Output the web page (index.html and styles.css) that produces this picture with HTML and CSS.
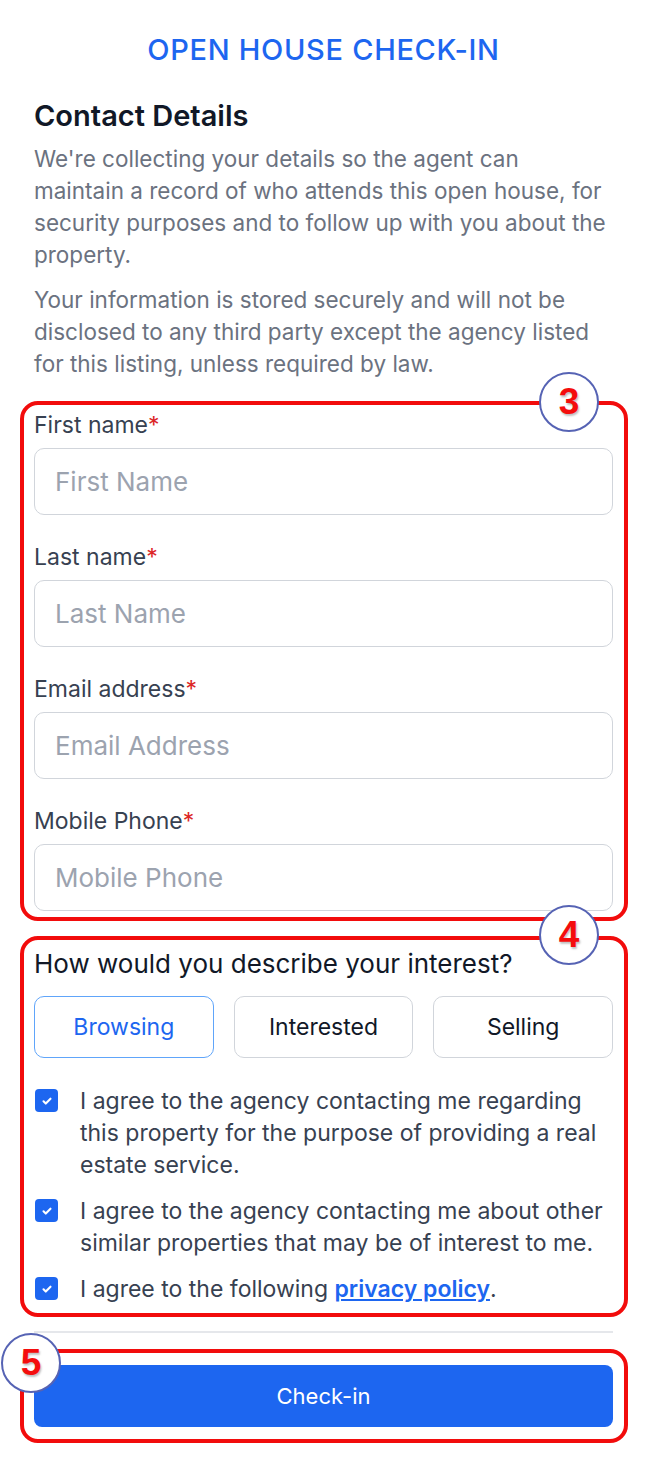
FILE: index.html
```html
<!DOCTYPE html>
<html lang="en">
<head>
<meta charset="utf-8">
<title>Open House Check-in</title>
<link rel="stylesheet" href="styles.css">
</head>
<body>
<main class="page">
  <h1 class="title">OPEN HOUSE CHECK-IN</h1>
  <h2 class="section-title">Contact Details</h2>
  <p class="intro">We're collecting your details so the agent can maintain a record of who attends this open house, for security purposes and to follow up with you about the property.</p>
  <p class="intro">Your information is stored securely and will not be disclosed to any third party except the agency listed for this listing, unless required by law.</p>

  <section class="annotated fields">
    <span class="badge badge-right">3</span>
    <div class="field">
      <label class="label">First name<span class="req">*</span></label>
      <input class="input" type="text" placeholder="First Name">
    </div>
    <div class="field">
      <label class="label">Last name<span class="req">*</span></label>
      <input class="input" type="text" placeholder="Last Name">
    </div>
    <div class="field">
      <label class="label">Email address<span class="req">*</span></label>
      <input class="input" type="text" placeholder="Email Address">
    </div>
    <div class="field">
      <label class="label">Mobile Phone<span class="req">*</span></label>
      <input class="input" type="text" placeholder="Mobile Phone">
    </div>
  </section>

  <section class="annotated interest">
    <span class="badge badge-right badge-4">4</span>
    <h3 class="question">How would you describe your interest?</h3>
    <div class="choices">
      <button class="choice active">Browsing</button>
      <button class="choice">Interested</button>
      <button class="choice">Selling</button>
    </div>
    <div class="checks">
      <div class="check-row">
        <span class="box"><svg viewBox="0 0 16 16" width="14" height="14"><path d="M4 8.3l2.6 2.6L12 5.4" fill="none" stroke="#fff" stroke-width="2.4" stroke-linecap="round" stroke-linejoin="round"/></svg></span>
        <span class="check-text">I agree to the agency contacting me regarding this property for the purpose of providing a real estate service.</span>
      </div>
      <div class="check-row">
        <span class="box"><svg viewBox="0 0 16 16" width="14" height="14"><path d="M4 8.3l2.6 2.6L12 5.4" fill="none" stroke="#fff" stroke-width="2.4" stroke-linecap="round" stroke-linejoin="round"/></svg></span>
        <span class="check-text">I agree to the agency contacting me about other similar properties that may be of interest to me.</span>
      </div>
      <div class="check-row">
        <span class="box"><svg viewBox="0 0 16 16" width="14" height="14"><path d="M4 8.3l2.6 2.6L12 5.4" fill="none" stroke="#fff" stroke-width="2.4" stroke-linecap="round" stroke-linejoin="round"/></svg></span>
        <span class="check-text">I agree to the following <a class="link" href="#">privacy policy</a>.</span>
      </div>
    </div>
  </section>

  <hr class="divider">

  <section class="annotated submit">
    <span class="badge badge-left">5</span>
    <button class="primary">Check-in</button>
  </section>
</main>
</body>
</html>
```
FILE: styles.css
```css
* { box-sizing: border-box; }
html, body { margin: 0; padding: 0; background: #fff; }
body {
  font-family: Inter, "Noto Sans", sans-serif;
  color: #111827;
}
.page {
  padding: 30px 34px 40px;
  display: flex;
  flex-direction: column;
}
.title {
  margin: 0;
  text-align: center;
  color: #1d66f0;
  font-size: 29px;
  font-weight: 500;
  letter-spacing: 0.7px;
  line-height: 40px;
}
.section-title {
  margin: 28px 0 0;
  font-size: 29px;
  font-weight: 600;
  line-height: 36px;
  color: #111827;
}
.intro {
  margin: 9px 0 0;
  font-size: 22.5px;
  line-height: 32px;
  color: #6b7280;
}
.intro + .intro { margin-top: 13px; }

.annotated { position: relative; }
.annotated::after {
  content: "";
  position: absolute;
  left: -14px;
  right: -15px;
  top: -10px;
  bottom: -10px;
  border: 4px solid #f20c0c;
  border-radius: 18px;
  pointer-events: none;
}
.interest::after { top: -10px; bottom: -12px; }
.submit::after { top: -16px; bottom: -16px; }
.badge {
  position: absolute;
  z-index: 2;
  width: 60px;
  height: 60px;
  border-radius: 50%;
  background: #fff;
  border: 2px solid #5663b4;
  color: #f40d0d;
  font-family: "Liberation Sans", Arial, sans-serif;
  font-weight: 700;
  font-size: 37px;
  line-height: 56px;
  text-align: center;
  text-shadow: 1px 2px 2px rgba(0,0,0,0.25);
}
.badge-right { right: 14px; top: -39px; }
.badge-4 { top: -41px; }
.badge-left { left: -33px; top: -32px; }

.fields {
  margin-top: 31px;
  display: flex;
  flex-direction: column;
  gap: 28px;
}
.field { display: flex; flex-direction: column; gap: 9px; }
.label {
  font-size: 23px;
  line-height: 28px;
  color: #374151;
}
.req { color: #dc2626; }
.input {
  height: 67px;
  width: 100%;
  border: 1.5px solid #d1d5db;
  border-radius: 10px;
  padding: 0 20px;
  font-family: Inter, "Noto Sans", sans-serif;
  font-size: 26px;
  color: #111827;
  background: #fff;
  outline: none;
}
.input::placeholder { color: #9ca3af; }

.interest { margin-top: 35px; }
.question {
  margin: 0;
  font-size: 26px;
  font-weight: 400;
  line-height: 36px;
  color: #111827;
}
.choices {
  margin-top: 14px;
  display: grid;
  grid-template-columns: 1fr 1fr 1fr;
  gap: 20px;
}
.choice {
  height: 62px;
  border: 1.5px solid #d1d5db;
  border-radius: 10px;
  background: #fff;
  font-family: Inter, "Noto Sans", sans-serif;
  font-size: 23px;
  color: #111827;
}
.choice.active {
  border-color: #60a5fa;
  color: #1d66f0;
}
.checks {
  margin-top: 27px;
  display: flex;
  flex-direction: column;
  gap: 14px;
}
.check-row { display: flex; align-items: flex-start; gap: 22px; }
.box {
  flex: none;
  width: 23px;
  height: 23px;
  margin-top: 4px;
  margin-left: 1px;
  border-radius: 4px;
  background: #1d66f0;
  display: flex;
  align-items: center;
  justify-content: center;
}
.check-text {
  font-size: 23px;
  line-height: 32px;
  color: #374151;
}
.link {
  color: #1d66f0;
  font-weight: 600;
  text-decoration: underline;
}

.divider {
  margin: 26px 0 0;
  border: 0;
  border-top: 2px solid #e5e7eb;
}
.submit { margin-top: 32px; }
.primary {
  display: block;
  width: 100%;
  height: 62px;
  border: 0;
  border-radius: 8px;
  background: #1d66f0;
  color: #fff;
  font-family: Inter, "Noto Sans", sans-serif;
  font-size: 22px;
}
```
